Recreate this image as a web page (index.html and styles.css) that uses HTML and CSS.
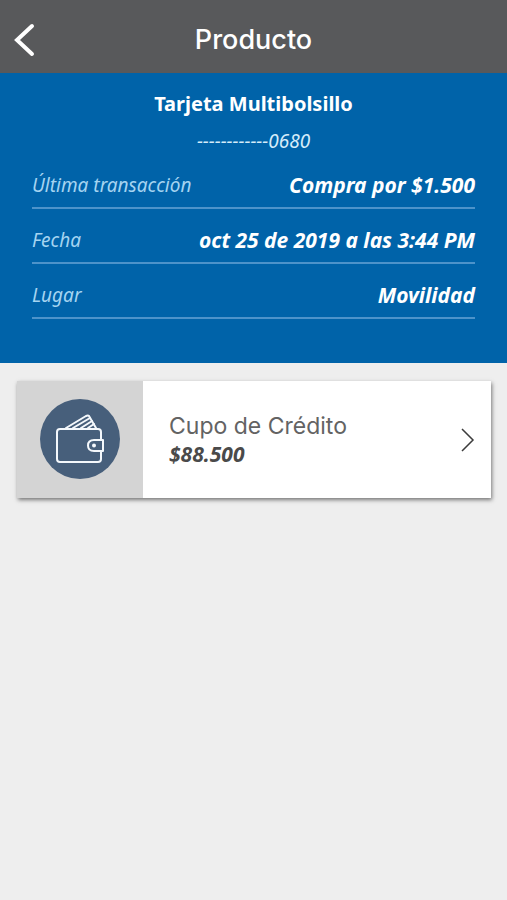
FILE: index.html
```html
<!DOCTYPE html>
<html lang="es">
<head>
    <meta charset="UTF-8">
    <meta name="viewport" content="width=device-width, initial-scale=1.0">
    <title>Producto</title>
    <link rel="stylesheet" href="styles.css">
</head>
<body>

  <!-- top bar -->
  <header class="navbar">
    <button class="back" type="button" aria-label="Volver">
      <svg width="24" height="36" viewBox="0 0 24 36">
        <path d="M18 4L3 18L18 32" fill="none" stroke="#fff" stroke-width="4" stroke-linecap="round" stroke-linejoin="miter"/>
      </svg>
    </button>
    <h1>Producto</h1>
  </header>

  <main>
    <!-- card details -->
    <section class="summary">
      <h2>Tarjeta Multibolsillo</h2>
      <p class="number">------------0680</p>
      <dl class="details">
        <div class="row">
          <dt>Última transacción</dt>
          <dd>Compra por $1.500</dd>
        </div>
        <div class="row">
          <dt>Fecha</dt>
          <dd>oct 25 de 2019 a las 3:44 PM</dd>
        </div>
        <div class="row">
          <dt>Lugar</dt>
          <dd>Movilidad</dd>
        </div>
      </dl>
    </section>

    <a class="credit" href="#">
      <span class="credit-icon">
        <svg width="80" height="80" viewBox="0 0 80 80">
          <circle cx="40" cy="40" r="40" fill="#475f7b"/>
          <g fill="none" stroke="#f4f8fc" stroke-width="2" stroke-linecap="round" stroke-linejoin="round">
            <path d="M61 40V33Q61 30 58 30H20Q17 30 17 33V60Q17 63 20 63H58Q61 63 61 60V52"/>
            <path d="M63 41H54Q48 41 48 46.500Q48 52 54 52H63Z"/>
            <path d="M26 29L46 17Q48 16 49 17L56 29"/>
            <path d="M33 29L50 19M41 29L52 22M48 29L54 25"/>
          </g>
          <circle cx="54" cy="46.500" r="2" fill="#f4f8fc"/>
        </svg>
      </span>
      <span class="credit-text">
        <span class="credit-name">Cupo de Crédito</span>
        <span class="credit-value">$88.500</span>
      </span>
      <svg class="arrow" width="14" height="26" viewBox="0 0 14 26">
        <path d="M1 2L12 13L1 24" fill="none" stroke="#3c3c3c" stroke-width="1.500"/>
      </svg>
    </a>
  </main>

</body>
</html>
```
FILE: styles.css
```css
* {
  box-sizing: border-box;
}

body {
  margin: 0;
  font-family: "Noto Sans", "Open Sans", sans-serif;
  background-color: #eeeeee;
}

h1, h2, p, dl, dd {
  margin: 0;
}

/* top bar, the title stays centered between two equal columns */
.navbar {
  display: grid;
  grid-template-columns: 48px 1fr 48px;
  align-items: center;
  padding: 6px 0 0;
  min-height: 73px;
  background-color: #58595b;
  color: #fff;
}

.navbar h1 {
  font-family: Inter, sans-serif;
  font-size: 27px;
  font-weight: 500;
  line-height: 32px;
  text-align: center;
}

.back {
  display: flex;
  padding: 0 10px 0 14px;
  border: none;
  background: none;
  cursor: pointer;
}

/* blue section */
.summary {
  padding: 18px 32px 44px;
  background-color: #0063a9;
  color: #fff;
}

.summary h2 {
  font-size: 20px;
  font-weight: 700;
  line-height: 26px;
  text-align: center;
}

.number {
  margin-top: 11px;
  font-size: 19px;
  font-style: italic;
  line-height: 26px;
  color: #d5ecfa;
  text-align: center;
}

.row {
  display: flex;
  justify-content: space-between;
  align-items: center;
  height: 55px;
  padding-top: 8px;
  border-bottom: 2px solid #4d93ca;
  font-size: 19px;
  font-style: italic;
}

.row dt {
  color: #a5d4f1;
}

.row dd {
  font-size: 21px;
  font-weight: 700;
}

/* credit card link */
.credit {
  display: flex;
  align-items: stretch;
  margin: 18px 16px 18px 17px;
  min-height: 117px;
  padding-right: 16px;
  background-color: #fff;
  box-shadow: 1px 2px 4px rgba(0, 0, 0, 0.5);
  text-decoration: none;
}

.credit-icon {
  display: flex;
  align-items: center;
  justify-content: center;
  width: 126px;
  padding-bottom: 2px;
  background-color: #d4d4d4;
}

.credit-text {
  display: flex;
  flex: 1;
  flex-direction: column;
  justify-content: center;
  padding: 0 0 2px 26px;
}

.credit-name {
  font-family: Inter, sans-serif;
  font-size: 23px;
  line-height: 30px;
  color: #636363;
}

.credit-value {
  font-size: 21px;
  font-style: italic;
  font-weight: 700;
  line-height: 26px;
  color: #4a4a4a;
}

.arrow {
  align-self: center;
}
```
